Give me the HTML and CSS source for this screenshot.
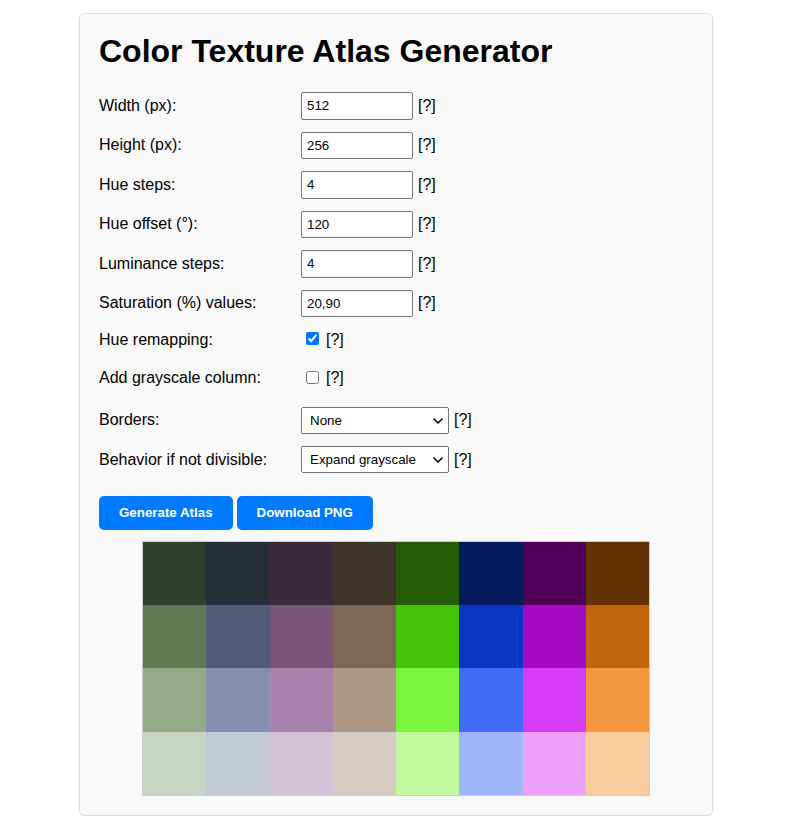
FILE: index.html
```html
<!DOCTYPE html>
<html lang="en">
<head>
<meta charset="utf-8">
<title>Color Texture Atlas Generator</title>
<link rel="stylesheet" href="styles.css">
</head>
<body>
<div class="card">
  <h1>Color Texture Atlas Generator</h1>
  <div class="row">
    <label class="lbl" for="w">Width (px):</label>
    <input class="txt" id="w" type="text" value="512">
    <span class="help">[?]</span>
  </div>
  <div class="row">
    <label class="lbl" for="h">Height (px):</label>
    <input class="txt" id="h" type="text" value="256">
    <span class="help">[?]</span>
  </div>
  <div class="row">
    <label class="lbl" for="hs">Hue steps:</label>
    <input class="txt" id="hs" type="text" value="4">
    <span class="help">[?]</span>
  </div>
  <div class="row">
    <label class="lbl" for="ho">Hue offset (°):</label>
    <input class="txt" id="ho" type="text" value="120">
    <span class="help">[?]</span>
  </div>
  <div class="row">
    <label class="lbl" for="ls">Luminance steps:</label>
    <input class="txt" id="ls" type="text" value="4">
    <span class="help">[?]</span>
  </div>
  <div class="row">
    <label class="lbl" for="sv">Saturation (%) values:</label>
    <input class="txt" id="sv" type="text" value="20,90">
    <span class="help">[?]</span>
  </div>
  <div class="row check">
    <label class="lbl" for="hr">Hue remapping:</label>
    <input class="cb" id="hr" type="checkbox" checked>
    <span class="help">[?]</span>
  </div>
  <div class="row check">
    <label class="lbl" for="gc">Add grayscale column:</label>
    <input class="cb" id="gc" type="checkbox">
    <span class="help">[?]</span>
  </div>
  <div class="row sel-row">
    <label class="lbl" for="b">Borders:</label>
    <span class="sel-wrap">
      <select class="sel" id="b"><option>None</option></select>
      <svg class="chev" width="10" height="6" viewBox="0 0 10 6"><path d="M1 1 L5 5 L9 1" fill="none" stroke="#000" stroke-width="1.6" stroke-linecap="round" stroke-linejoin="round"/></svg>
    </span>
    <span class="help">[?]</span>
  </div>
  <div class="row sel-row">
    <label class="lbl" for="bd">Behavior if not divisible:</label>
    <span class="sel-wrap">
      <select class="sel" id="bd"><option>Expand grayscale</option></select>
      <svg class="chev" width="10" height="6" viewBox="0 0 10 6"><path d="M1 1 L5 5 L9 1" fill="none" stroke="#000" stroke-width="1.6" stroke-linecap="round" stroke-linejoin="round"/></svg>
    </span>
    <span class="help">[?]</span>
  </div>
  <div class="buttons">
    <button class="btn">Generate Atlas</button>
    <button class="btn">Download PNG</button>
  </div>
  <div class="atlas-wrap">
    <div class="atlas">
      <div style="background:#323d2b"></div><div style="background:#272f3d"></div><div style="background:#3b2a3c"></div><div style="background:#3e3329"></div><div style="background:#235c05"></div><div style="background:#041c5c"></div><div style="background:#500058"></div><div style="background:#623204"></div>
      <div style="background:#5f7952"></div><div style="background:#525b79"></div><div style="background:#775478"></div><div style="background:#7b6753"></div><div style="background:#44c30a"></div><div style="background:#0a36c5"></div><div style="background:#a30ac2"></div><div style="background:#c1650a"></div>
      <div style="background:#93ab87"></div><div style="background:#858fae"></div><div style="background:#a883ae"></div><div style="background:#ad9886"></div><div style="background:#7bf43d"></div><div style="background:#3e6cf6"></div><div style="background:#d63bf5"></div><div style="background:#f4983e"></div>
      <div style="background:#cad6c3"></div><div style="background:#c2c8d6"></div><div style="background:#d3c2d6"></div><div style="background:#d6cbc2"></div><div style="background:#c1f99e"></div><div style="background:#9fb6fa"></div><div style="background:#eca0fa"></div><div style="background:#f9cc9e"></div>
    </div>
  </div>
</div>
</body>
</html>
```

FILE: styles.css
```css
html, body {
  margin: 0;
  padding: 0;
  background: #ffffff;
}
body {
  font-family: "Liberation Sans", Arial, sans-serif;
  font-size: 16px;
  color: #000;
}
.card {
  width: 594px;
  margin: 13px 0 0 79px;
  padding: 19px;
  background: #f9f9f9;
  border: 1px solid #dddddd;
  border-radius: 6px;
  box-shadow: 0 1px 3px rgba(0,0,0,0.08);
}
h1 {
  font-size: 32px;
  line-height: 32px;
  font-weight: bold;
  margin: 2px 0 25px 0;
}
.row {
  display: flex;
  align-items: center;
  height: 27.5px;
  margin-bottom: 12px;
}
.row.check {
  height: 26.7px;
  align-items: flex-start;
}
.row.check .lbl {
  margin-top: 1.5px;
}
.row.sel-row {
  height: 27.7px;
}
.lbl {
  width: 202px;
  flex: none;
}
.txt {
  box-sizing: border-box;
  width: 112px;
  height: 27.5px;
  padding: 0 5px;
  font-family: "Liberation Sans", Arial, sans-serif;
  font-size: 13.33px;
  color: #000;
  background: #fff;
  border: 1px solid #767676;
  border-radius: 2px;
  margin: 0;
}
.cb {
  width: 13px;
  height: 13px;
  margin: 3px 7px 0 5px;
}
.sel-wrap {
  position: relative;
  display: inline-flex;
}
.sel {
  -webkit-appearance: none;
  appearance: none;
  box-sizing: border-box;
  width: 148px;
  height: 27px;
  padding: 0 24px 0 8px;
  font-family: "Liberation Sans", Arial, sans-serif;
  font-size: 13.33px;
  color: #000;
  background: #fff;
  border: 1px solid #767676;
  border-radius: 2px;
  margin: 0;
}
.chev {
  position: absolute;
  right: 6px;
  top: 11px;
  pointer-events: none;
}
.help {
  margin-left: 5px;
  cursor: help;
}
.row.check .help {
  margin-left: 0;
  margin-top: 1.5px;
}
.buttons {
  display: flex;
  gap: 4px;
  margin-top: 22px;
}
.btn {
  font-family: "Liberation Sans", Arial, sans-serif;
  font-size: 13.33px;
  font-weight: bold;
  color: #fff;
  background: #007bff;
  border: none;
  border-radius: 5px;
  height: 34px;
  padding: 0 20px;
  white-space: nowrap;
  cursor: pointer;
}
.atlas-wrap {
  display: flex;
  justify-content: center;
  margin-top: 11px;
}
.atlas {
  display: grid;
  grid-template-columns: repeat(8, 1fr);
  grid-template-rows: repeat(4, 1fr);
  width: 506px;
  height: 253px;
  border: 1px solid #cccccc;
}
```
